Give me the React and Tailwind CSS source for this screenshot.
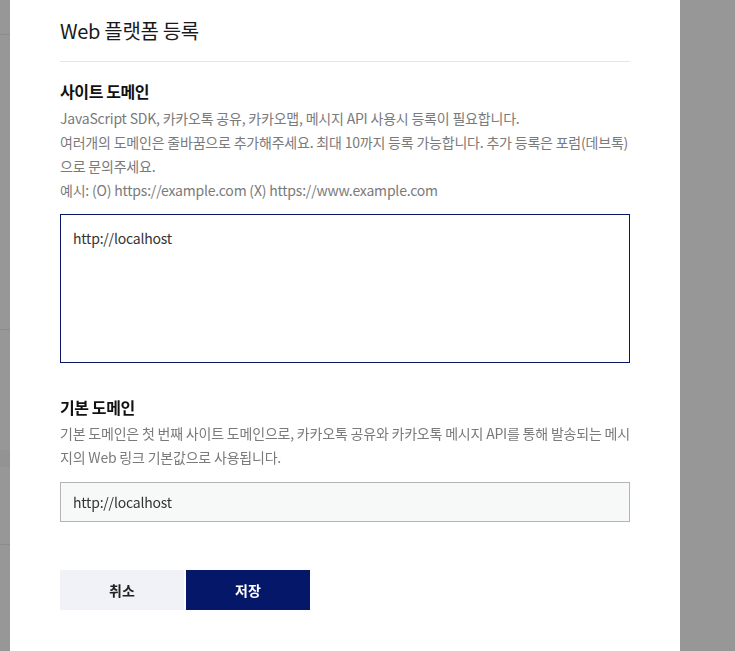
import React, { useState } from 'react';

const font = { fontFamily: '"Noto Sans CJK KR", "Noto Sans", sans-serif' };

const App = () => {
  const [domains, setDomains] = useState('http://localhost');

  return (
    <div className="flex min-h-[651px] w-full bg-[#979797]" style={font}>
      {/* background page peeking through the overlay */}
      <div className="flex w-[10px] shrink-0 flex-col">
        <div className="h-[35px] border-b border-[#8c8c8c]" />
        <div className="h-[295px] border-b border-[#8c8c8c]" />
        <div className="h-[120px]" />
        <div className="h-[17px] bg-[#939393]" />
        <div className="h-[78px] border-b border-[#8c8c8c]" />
      </div>

      {/* modal */}
      <div className="w-[670px] shrink-0 bg-white px-[50px] pt-[17px]">
        <h1 className="text-[20px] leading-[28px] tracking-[-0.3px] text-[#1a1a1a]">Web 플랫폼 등록</h1>
        <div className="mt-[16px] border-b border-[#e6e6e6]" />

        {/* site domain */}
        <h2 className="mt-[17px] text-[16px] font-bold leading-[24px] tracking-[-0.4px] text-[#111]">사이트 도메인</h2>
        <p className="mt-[3px] text-[14px] leading-[24px] tracking-[-0.2px] text-[#7a7a7a]">
          JavaScript SDK, 카카오톡 공유, 카카오맵, 메시지 API 사용시 등록이 필요합니다.
          <br />
          여러개의 도메인은 줄바꿈으로 추가해주세요. 최대 10까지 등록 가능합니다. 추가 등록은 포럼(데브톡)
          <br />
          으로 문의주세요.
          <br />
          예시: (O) https://example.com (X) https://www.example.com
        </p>
        <textarea
          value={domains}
          onChange={(e) => setDomains(e.target.value)}
          autoFocus
          className="mt-[12px] block h-[149px] w-full resize-none border border-[#0a1766] px-[12px] pt-[11px] pb-[12px] text-[14px] leading-[24px] tracking-[-0.2px] text-[#333] caret-black outline-none"
          style={font}
        />

        {/* default domain */}
        <h2 className="mt-[32px] text-[16px] font-bold leading-[24px] tracking-[-0.4px] text-[#111]">기본 도메인</h2>
        <p className="mt-[2px] text-[14px] leading-[24px] tracking-[-0.2px] text-[#7a7a7a]">
          기본 도메인은 첫 번째 사이트 도메인으로, 카카오톡 공유와 카카오톡 메시지 API를 통해 발송되는 메시
          <br />
          지의 Web 링크 기본값으로 사용됩니다.
        </p>
        <div className="mt-[13px] flex h-[40px] items-center border border-[#b4b4b4] bg-[#f7f8f8] px-[12px] text-[14px] tracking-[-0.2px] text-[#333]">
          http://localhost
        </div>

        {/* actions */}
        <div className="mt-[48px] flex gap-[2px]">
          <button className="h-[40px] w-[124px] bg-[#f1f2f7] text-[14px] font-bold text-[#222]">취소</button>
          <button className="h-[40px] w-[124px] bg-[#051769] text-[14px] font-bold text-white">저장</button>
        </div>
      </div>

      <div className="flex-1" />
    </div>
  );
};

export default App;
